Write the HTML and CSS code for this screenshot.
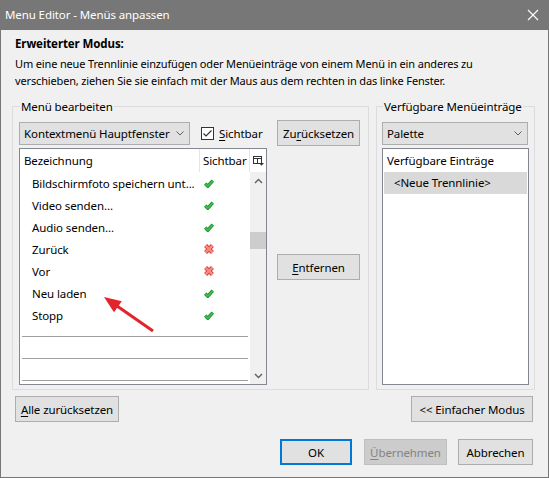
FILE: index.html
```html
<!DOCTYPE html>
<html lang="de">
<head>
<meta charset="utf-8">
<title>Menu Editor - Menüs anpassen</title>
<link rel="stylesheet" href="styles.css">
</head>
<body>
<div class="window">
  <div class="titlebar">
    <span class="title">Menu Editor - Menüs anpassen</span>
    <svg class="close" width="12" height="12" viewBox="0 0 12 12"><path d="M1 1 L11 11 M11 1 L1 11" stroke="#fff" stroke-width="1.1" fill="none"/></svg>
  </div>
  <div class="main">
    <div class="intro">
      <div class="heading">Erweiterter Modus:</div>
      <p class="desc">Um eine neue Trennlinie einzufügen oder Menüeinträge von einem Menü in ein anderes zu<br>verschieben, ziehen Sie sie einfach mit der Maus aus dem rechten in das linke Fenster.</p>
    </div>
    <div class="groups">
      <fieldset class="group group-edit">
        <legend>Menü bearbeiten</legend>
        <div class="edit-grid">
          <div class="toolbar">
            <div class="combo combo-menu"><span>Kontextmenü Hauptfenster</span><svg class="chev" width="8" height="5" viewBox="0 0 8 5"><path d="M0.5 0.5 L4 4 L7.5 0.5" stroke="#606060" fill="none"/></svg></div>
            <div class="check"><span class="box"><svg width="11" height="11" viewBox="0 0 11 11"><path d="M1.5 5.5 L4 8 L9.5 2.5" stroke="#333" stroke-width="1.2" fill="none"/></svg></span><span><u>S</u>ichtbar</span></div>
          </div>
          <button class="btn">Zu<u>r</u>ücksetzen</button>
          <div class="list">
            <div class="list-head">
              <div class="col-name">Bezeichnung</div>
              <div class="col-vis">Sichtbar</div>
              <div class="col-chooser"><svg width="11" height="10" viewBox="0 0 11 10"><rect x="0.5" y="0.5" width="8" height="7" fill="none" stroke="#333"/><path d="M0.5 2.5 H8.5 M4.5 2.5 V7.5" stroke="#333" fill="none"/><path d="M6 7 H11 L8.5 9.8 Z" fill="#333"/></svg></div>
            </div>
            <div class="list-body">
              <div class="rows">
                <div class="row"><span class="name">Bildschirmfoto speichern unt...</span><span class="vis"><svg class="ok" width="10" height="9" viewBox="0 0 10 9"><path d="M1.2 4.6 L3.8 7.2 L8.8 1.6" stroke="#1b8a2e" stroke-width="3.4" fill="none"/><path d="M1.2 4.6 L3.8 7.2 L8.8 1.6" stroke="#3cbf4d" stroke-width="1.8" fill="none"/></svg></span></div>
                <div class="row"><span class="name">Video senden...</span><span class="vis"><svg class="ok" width="10" height="9" viewBox="0 0 10 9"><path d="M1.2 4.6 L3.8 7.2 L8.8 1.6" stroke="#1b8a2e" stroke-width="3.4" fill="none"/><path d="M1.2 4.6 L3.8 7.2 L8.8 1.6" stroke="#3cbf4d" stroke-width="1.8" fill="none"/></svg></span></div>
                <div class="row"><span class="name">Audio senden...</span><span class="vis"><svg class="ok" width="10" height="9" viewBox="0 0 10 9"><path d="M1.2 4.6 L3.8 7.2 L8.8 1.6" stroke="#1b8a2e" stroke-width="3.4" fill="none"/><path d="M1.2 4.6 L3.8 7.2 L8.8 1.6" stroke="#3cbf4d" stroke-width="1.8" fill="none"/></svg></span></div>
                <div class="row"><span class="name">Zurück</span><span class="vis"><svg class="no" width="10" height="10" viewBox="0 0 10 10"><path d="M1.6 1.6 L8.4 8.4 M8.4 1.6 L1.6 8.4" stroke="#d43c35" stroke-width="4.2" fill="none"/><path d="M1.6 1.6 L8.4 8.4 M8.4 1.6 L1.6 8.4" stroke="#f58a80" stroke-width="2.4" fill="none"/></svg></span></div>
                <div class="row"><span class="name">Vor</span><span class="vis"><svg class="no" width="10" height="10" viewBox="0 0 10 10"><path d="M1.6 1.6 L8.4 8.4 M8.4 1.6 L1.6 8.4" stroke="#d43c35" stroke-width="4.2" fill="none"/><path d="M1.6 1.6 L8.4 8.4 M8.4 1.6 L1.6 8.4" stroke="#f58a80" stroke-width="2.4" fill="none"/></svg></span></div>
                <div class="row"><span class="name">Neu laden</span><span class="vis"><svg class="ok" width="10" height="9" viewBox="0 0 10 9"><path d="M1.2 4.6 L3.8 7.2 L8.8 1.6" stroke="#1b8a2e" stroke-width="3.4" fill="none"/><path d="M1.2 4.6 L3.8 7.2 L8.8 1.6" stroke="#3cbf4d" stroke-width="1.8" fill="none"/></svg></span></div>
                <div class="row"><span class="name">Stopp</span><span class="vis"><svg class="ok" width="10" height="9" viewBox="0 0 10 9"><path d="M1.2 4.6 L3.8 7.2 L8.8 1.6" stroke="#1b8a2e" stroke-width="3.4" fill="none"/><path d="M1.2 4.6 L3.8 7.2 L8.8 1.6" stroke="#3cbf4d" stroke-width="1.8" fill="none"/></svg></span></div>
                <div class="row sep"><span class="sep-line"></span></div>
                <div class="row sep"><span class="sep-line"></span></div>
                <div class="row sep"><span class="sep-line"></span></div>
              </div>
              <div class="vscroll">
                <div class="sb-btn"><svg width="9" height="6" viewBox="0 0 9 6"><path d="M1 5 L4.5 1.5 L8 5" stroke="#606060" stroke-width="1.4" fill="none"/></svg></div>
                <div class="thumb"></div>
                <div class="sb-space"></div>
                <div class="sb-btn"><svg width="9" height="6" viewBox="0 0 9 6"><path d="M1 1 L4.5 4.5 L8 1" stroke="#606060" stroke-width="1.4" fill="none"/></svg></div>
              </div>
            </div>
          </div>
          <div class="side">
            <button class="btn btn-remove"><u>E</u>ntfernen</button>
          </div>
        </div>
      </fieldset>
      <fieldset class="group group-avail">
        <legend>Verfügbare Menüeinträge</legend>
        <div class="avail-grid">
          <div class="combo combo-palette"><span>Palette</span><svg class="chev" width="8" height="5" viewBox="0 0 8 5"><path d="M0.5 0.5 L4 4 L7.5 0.5" stroke="#606060" fill="none"/></svg></div>
          <div class="list list-avail">
            <div class="avail-head">Verfügbare Einträge</div>
            <div class="avail-item">&lt;Neue Trennlinie&gt;</div>
          </div>
        </div>
      </fieldset>
    </div>
    <div class="row-actions">
      <button class="btn btn-reset-all"><u>A</u>lle zurücksetzen</button>
      <button class="btn btn-simple">&lt;&lt; Einfacher Modus</button>
    </div>
    <div class="row-dialog">
      <button class="btn btn-ok">OK</button>
      <button class="btn btn-apply" disabled><u>Ü</u>bernehmen</button>
      <button class="btn btn-cancel">Abbrechen</button>
    </div>
  </div>
  <svg class="red-arrow" width="60" height="45" viewBox="0 0 60 45"><path d="M53 39 L17 14" stroke="#e3242b" stroke-width="3" fill="none"/><path d="M4 5 L21.8 9.2 L14 20.3 Z" fill="#e3242b"/></svg>
</div>
</body>
</html>
```

FILE: styles.css
```css
* { box-sizing: border-box; }
html, body { margin: 0; padding: 0; }
body {
  width: 549px;
  height: 478px;
  overflow: hidden;
  background: #f0f0f0;
  font-family: "Noto Sans", "DejaVu Sans", sans-serif;
  font-size: 11.5px;
  letter-spacing: -0.1px;
  color: #000;
}
u { text-decoration: underline; text-underline-offset: 2px; }

.window {
  position: relative;
  width: 549px;
  height: 478px;
  border: 1px solid #777;
  border-top: none;
  background: #f0f0f0;
  white-space: nowrap;
}
.titlebar {
  height: 30px;
  background: #777;
  color: #fff;
  display: flex;
  align-items: center;
  justify-content: space-between;
  padding: 0 9px 0 4px;
}
.title { line-height: 16px; }
.close { display: block; }

.main { padding: 0 13px 0 11px; }
.intro { padding-left: 3px; }
.heading { font-weight: bold; line-height: 16px; margin-top: 6px; }
.desc { margin: 3px 0 0; line-height: 17px; font-size: 11px; letter-spacing: -0.15px; }

.groups { display: flex; gap: 7px; margin-top: 10px; }
.group {
  margin: 0;
  min-width: 0;
  height: 291px;
  border: 1px solid #dcdcdc;
  padding: 6px 6px 4px;
}
.group legend {
  margin-left: 1px;
  padding: 0 1px;
  line-height: 15px;
}
.group-edit { width: 357px; }
.group-avail { width: 159px; padding-left: 5px; padding-right: 5px; }

.edit-grid {
  display: grid;
  grid-template-columns: 248px 83px;
  grid-template-rows: 26px 237px;
  column-gap: 10px;
  row-gap: 2px;
}
.avail-grid {
  display: grid;
  grid-template-columns: 147px;
  grid-template-rows: 26px 237px;
  row-gap: 2px;
}
.toolbar { display: flex; align-items: center; }

.combo {
  height: 23px;
  background: #e1e1e1;
  border: 1px solid #adadad;
  display: flex;
  align-items: center;
  justify-content: space-between;
  padding: 0 5px 0 4px;
}
.combo-menu { width: 171px; }
.combo-palette { width: 146px; align-self: center; }
.chev { display: block; }

.check { display: flex; align-items: center; margin-left: 11px; }
.box {
  width: 13px;
  height: 13px;
  border: 1px solid #333;
  background: #fff;
  display: flex;
  align-items: center;
  justify-content: center;
  margin-right: 5px;
}
.box svg { display: block; }

.btn {
  font: inherit;
  letter-spacing: inherit;
  color: #000;
  height: 26px;
  padding: 0;
  background: #e1e1e1;
  border: 1px solid #adadad;
  border-radius: 0;
}
.btn-remove { width: 83px; margin-top: 106px; }
.side { display: flex; flex-direction: column; }

.list {
  height: 237px;
  border: 1px solid #828790;
  background: #fff;
  display: flex;
  flex-direction: column;
  overflow: hidden;
}
.list-head { display: flex; height: 23px; flex: none; }
.col-name {
  width: 180px;
  padding-left: 4px;
  line-height: 23px;
  border-right: 1px solid #e5e5e5;
}
.col-vis {
  width: 50px;
  padding-left: 3px;
  line-height: 23px;
  border-right: 1px solid #e5e5e5;
}
.col-chooser {
  width: 16px;
  display: flex;
  justify-content: center;
  padding-top: 7px;
}
.col-chooser svg { display: block; }
.list-body { flex: 1; display: flex; min-height: 0; }
.rows { flex: 1; overflow: hidden; }
.row { height: 22px; display: flex; align-items: center; }
.name { width: 179px; padding-left: 12px; }
.vis { padding-left: 5px; display: flex; align-items: center; }
.vis svg { display: block; }
.sep { align-items: flex-start; }
.sep-line {
  display: block;
  height: 1px;
  background: #a0a0a0;
  margin: 10px 2px 0 2px;
  flex: 1;
}
.vscroll {
  width: 16px;
  background: #f0f0f0;
  display: flex;
  flex-direction: column;
}
.sb-btn {
  height: 17px;
  flex: none;
  display: flex;
  align-items: center;
  justify-content: center;
}
.sb-btn svg { display: block; }
.thumb { height: 17px; margin-top: 43px; background: #cdcdcd; flex: none; }
.sb-space { flex: 1; }

.avail-head { line-height: 23px; padding-left: 4px; flex: none; }
.avail-item {
  height: 22px;
  line-height: 22px;
  margin: 0 1px;
  padding-left: 10px;
  background: #d9d9d9;
}

.row-actions {
  display: flex;
  justify-content: space-between;
  margin-top: 6px;
  padding: 0 2px 0 3px;
}
.btn-reset-all { width: 104px; }
.btn-simple { width: 122px; }

.row-dialog {
  display: flex;
  justify-content: flex-end;
  margin-top: 17px;
  padding-right: 2px;
}
.btn-ok { width: 72px; margin-right: 12px; border: 2px solid #0078d7; }
.btn-apply { width: 83px; margin-right: 11px; background: #cccccc; border-color: #bfbfbf; color: #838383; }
.btn-cancel { width: 75px; }

.red-arrow { position: absolute; left: 99px; top: 292px; display: block; }
```
